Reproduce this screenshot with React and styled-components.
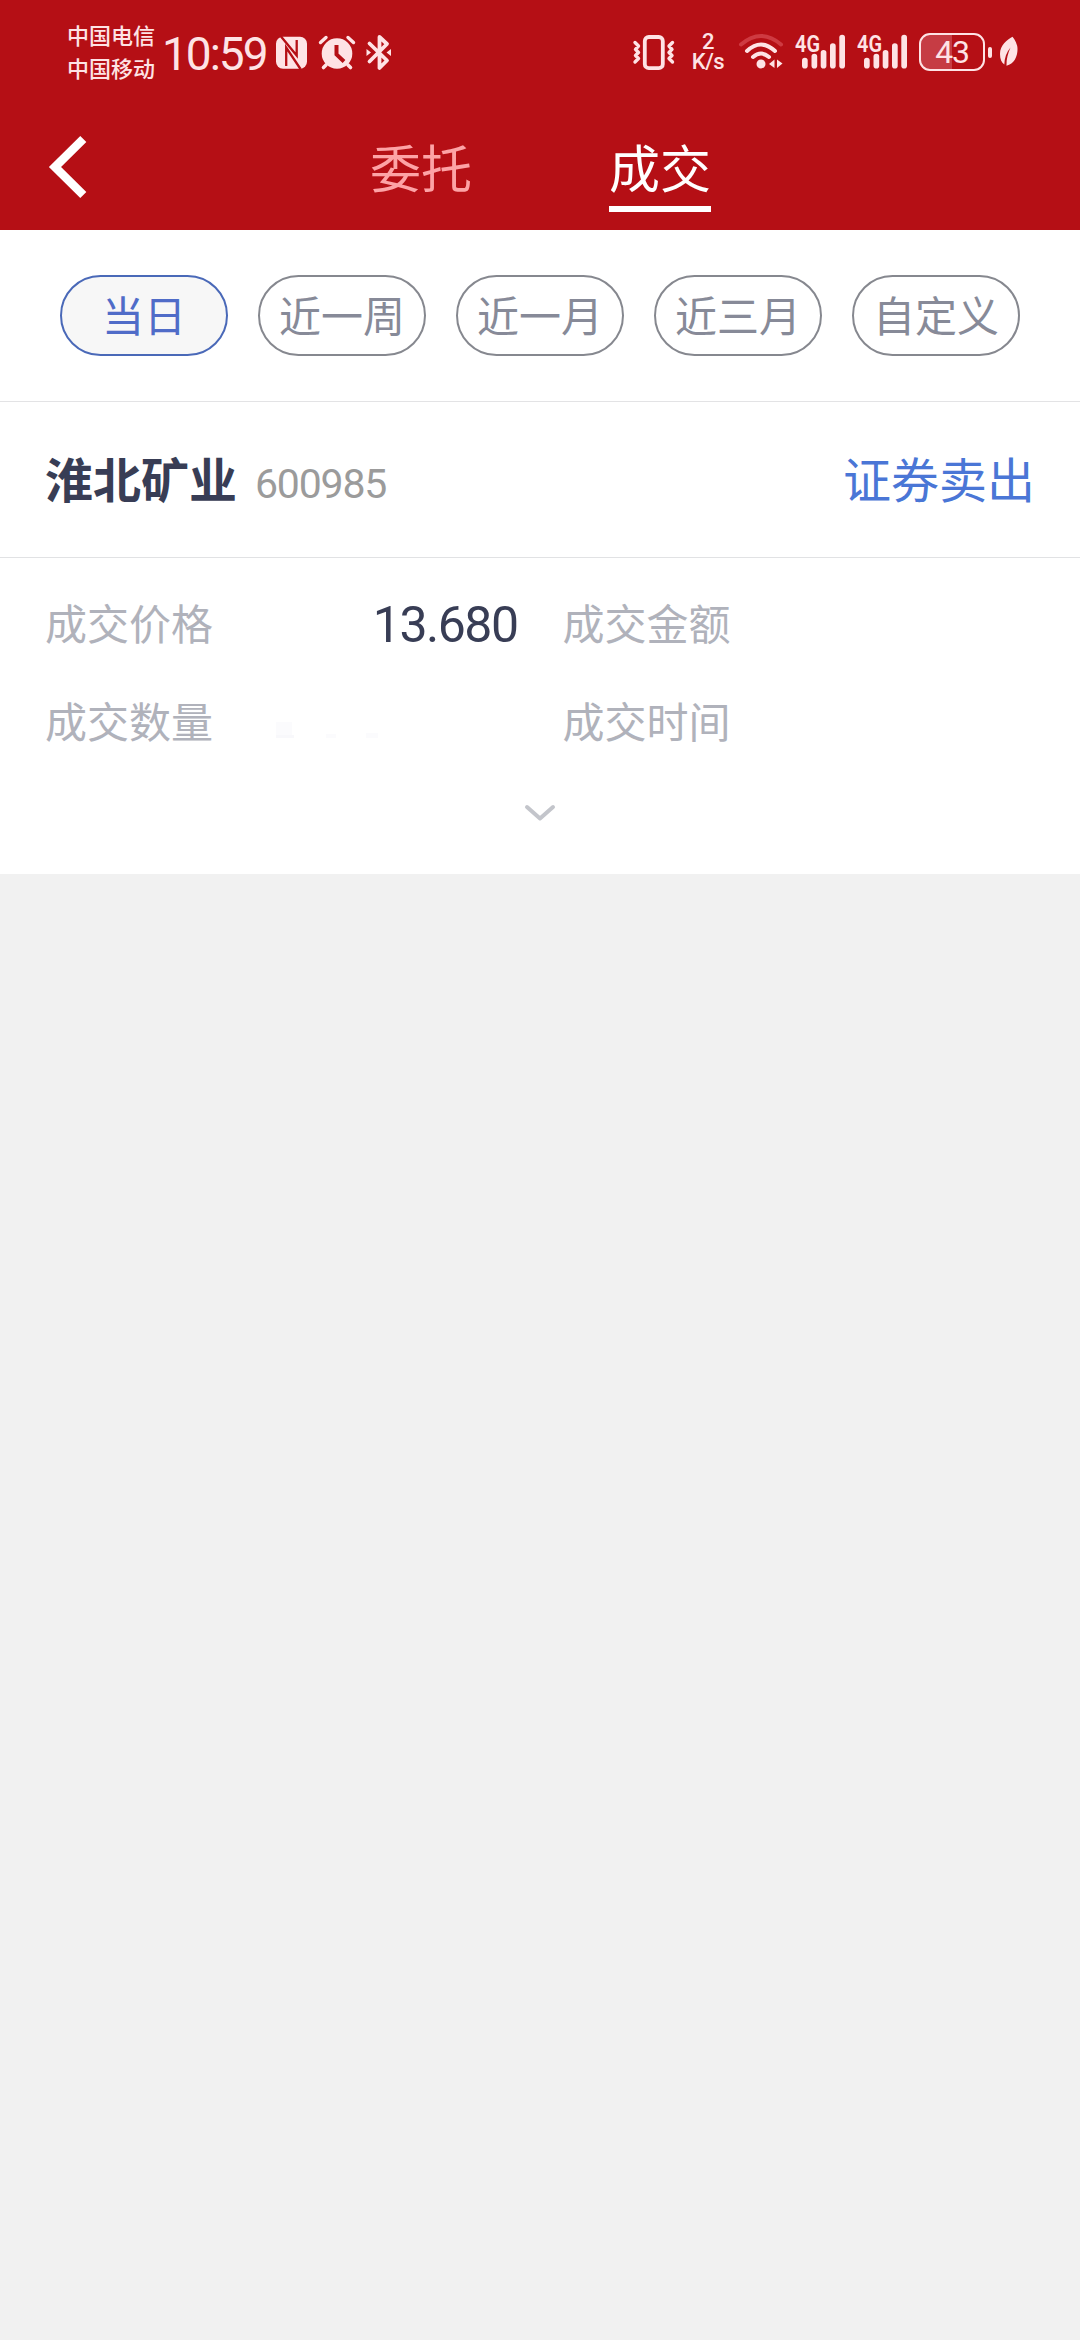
import React from 'react';
import styled, { createGlobalStyle } from 'styled-components';

const GlobalStyle = createGlobalStyle`
  * {
    box-sizing: border-box;
  }

  body {
    margin: 0;
    background: #f1f1f1;
    font-family: 'Noto Sans CJK SC', sans-serif;
  }
`;

const RED = '#b50f15';
const STATUS = '#fee3e5';

const Page = styled.div`
  width: 1080px;
  min-height: 2340px;
  background: #f1f1f1;
`;

const Header = styled.header`
  height: 230px;
  background: ${RED};
`;

const StatusBar = styled.div`
  display: flex;
  justify-content: space-between;
  height: 104px;
  padding: 0 61px 0 67px;
  color: ${STATUS};
`;

const StatusGroup = styled.div`
  display: flex;
  align-items: center;

  svg {
    flex: none;
    display: block;
  }
`;

const StatusIconGap = styled.span`
  width: ${({ $width }) => $width}px;
`;

const Carriers = styled.div`
  width: 88px;
  margin-right: 7px;
  padding-bottom: 2px;
  font-size: 22px;
  font-weight: 500;
  line-height: 33px;
  white-space: nowrap;
`;

const Clock = styled.div`
  width: 104px;
  margin-right: 8px;
  padding-top: 3px;
  font-family: Roboto, sans-serif;
  font-size: 46px;
  font-weight: 440;
  line-height: 52px;
  letter-spacing: -2px;
  white-space: nowrap;
`;

const Speed = styled.div`
  width: 36px;
  margin: 0 12px 0 14px;
  font-family: Roboto, sans-serif;
  font-size: 22px;
  font-weight: 500;
  line-height: 20px;
  letter-spacing: -0.5px;
  text-align: center;
`;

const Battery = styled.div`
  width: 66px;
  height: 38px;
  border: 2.5px solid ${STATUS};
  border-radius: 11px;
  background: linear-gradient(to right, #c63c44 31px, transparent 31px);
  font-family: Roboto, sans-serif;
  font-size: 32px;
  font-weight: 440;
  line-height: 34px;
  letter-spacing: -1.2px;
  text-align: center;
`;

const BatteryTip = styled.div`
  width: 4px;
  height: 11px;
  margin: 0 7px 0 3px;
  border-radius: 2px;
  background: ${STATUS};
`;

const NavBar = styled.nav`
  display: grid;
  grid-template-columns: 1fr auto 1fr;
  height: 126px;
`;

const BackButton = styled.button`
  display: flex;
  align-items: flex-start;
  padding: 30px 0 0 48px;
  border: 0;
  background: none;
`;

const Tabs = styled.div`
  display: flex;
  gap: 137px;
  height: 108px;
  padding-left: 1px;
`;

const Tab = styled.div`
  padding-top: 25px;
  border-bottom: 6px solid ${({ $active }) => ($active ? '#fff' : 'transparent')};
  color: ${({ $active }) => ($active ? '#fff' : '#fda3a6')};
  font-size: 51px;
  line-height: 74px;
`;

const Filters = styled.div`
  display: flex;
  gap: 30px;
  height: 172px;
  padding: 45px 60px 0;
  border-bottom: 1px solid #e3e3e5;
  background: #fff;
`;

const Pill = styled.button`
  width: 168px;
  height: 81px;
  padding: 0 0 4px;
  border: 2px solid ${({ $active }) => ($active ? '#4a69b8' : '#86888f')};
  border-radius: 41px;
  background: ${({ $active }) => ($active ? '#f7f7f7' : '#fff')};
  color: ${({ $active }) => ($active ? '#506cc8' : '#878a98')};
  font-family: inherit;
  font-size: 42px;
  line-height: 73px;
  white-space: nowrap;
`;

const Card = styled.section`
  height: 472px;
  background: #fff;
`;

const CardHead = styled.div`
  display: flex;
  align-items: baseline;
  height: 156px;
  padding: 40px 45px 0;
  border-bottom: 1px solid #e1e2e4;
  line-height: 70px;
`;

const StockName = styled.div`
  color: #383d55;
  font-size: 48px;
  font-weight: 700;
`;

const StockCode = styled.div`
  margin-left: 18px;
  color: #9b9b9b;
  font-family: Roboto, sans-serif;
  font-size: 41px;
  letter-spacing: -1.2px;
`;

const Direction = styled.div`
  margin-left: auto;
  color: #4a76d6;
  font-size: 48px;
`;

const Details = styled.div`
  display: grid;
  grid-template-columns: 1fr 1fr;
  column-gap: 45px;
  padding: 15px 45px 0;
`;

const Field = styled.div`
  display: flex;
  align-items: flex-start;
  justify-content: space-between;
  height: 98px;
`;

const Label = styled.span`
  color: #b0b2bb;
  font-size: 42px;
  line-height: 98px;
`;

const Value = styled.span`
  color: #383d55;
  font-family: Roboto, sans-serif;
  font-size: 50px;
  line-height: 104px;
  letter-spacing: -1.5px;
`;

const Expand = styled.div`
  display: flex;
  justify-content: center;
  padding-top: 35px;
`;

const NfcIcon = () => (
  <svg width="35" height="40" viewBox="0 0 35 40">
    <rect x="2" y="4.7" width="31" height="32" rx="7" fill={STATUS} />
    <path d="M7 4.5L22.7 23.5V8M12.2 34V15.5L26.5 37" fill="none" stroke={RED} strokeWidth="2.3" />
  </svg>
);

const AlarmIcon = () => (
  <svg width="38" height="40" viewBox="0 0 38 40">
    <circle cx="19" cy="21.5" r="15.3" fill={STATUS} />
    <path d="M2.5 10.5L8 5.5M35.5 10.5L30 5.5" stroke={STATUS} strokeWidth="3.4" strokeLinecap="round" />
    <path d="M8 33L5.5 35.5M30 33L32.5 35.5" stroke={STATUS} strokeWidth="3.6" strokeLinecap="round" />
    <path d="M18.5 13V22.5L26 29.5" fill="none" stroke={RED} strokeWidth="4" />
  </svg>
);

const BluetoothIcon = () => (
  <svg width="28" height="40" viewBox="0 0 28 40">
    <path
      d="M4.5 11.5L22 28.5L14.5 36V5L22 12L4.5 29.5"
      fill="none"
      stroke={STATUS}
      strokeWidth="3.8"
      strokeLinejoin="round"
      strokeLinecap="round"
    />
    <path d="M1.5 17L6 20.5L1.5 24ZM26 17L21.5 20.5L26 24Z" fill={STATUS} />
  </svg>
);

const VibrateIcon = () => (
  <svg width="44" height="40" viewBox="0 0 44 40" fill="none" stroke={STATUS}>
    <rect x="12.8" y="5" width="18" height="31.2" rx="4" strokeWidth="3.8" />
    <path
      d="M3 10.5L6.5 14L3.5 17.3L6.5 20.5L3.5 23.5L6.5 26.5L3 30M40.5 10.5L37 14L40 17.3L37 20.5L40 23.5L37 26.5L40.5 30"
      strokeWidth="3.4"
      strokeLinejoin="round"
      strokeLinecap="round"
    />
  </svg>
);

const WifiIcon = () => (
  <svg width="46" height="40" viewBox="0 0 46 40">
    <g fill="none" stroke={STATUS} strokeWidth="4" strokeLinecap="round">
      <path d="M3 12.5Q23 -4.5 43 12.5" stroke="#ce3a41" />
      <path d="M9 19Q23 6 37 19" />
      <path d="M15 25Q23 18 31 25" />
    </g>
    <circle cx="23" cy="32" r="4.5" fill={STATUS} />
    <path d="M36.5 27.5V36L31 32ZM39 27.5V36L44.5 31.5Z" fill={STATUS} />
  </svg>
);

const BARS = [
  { x: 7, y: 25.7 },
  { x: 16.5, y: 21.7 },
  { x: 25.7, y: 18 },
  { x: 35, y: 11.3 },
  { x: 44.3, y: 2.7 },
];

const SignalIcon = () => (
  <svg width="62" height="40" viewBox="0 0 62 40" fill={STATUS}>
    <text x="0" y="19.5" fontFamily="Roboto, sans-serif" fontSize="23" fontWeight="600" textLength="25" lengthAdjust="spacingAndGlyphs">4G</text>
    {BARS.map(({ x, y }) => (
      <rect key={x} x={x} y={y} width="5.7" height={36.5 - y} rx="2.8" />
    ))}
  </svg>
);

const LeafIcon = () => (
  <svg width="20" height="40" viewBox="0 0 20 40">
    <path d="M13.5 4.7C8 8 1 13 1 22C1 27 2.5 30.5 5.3 32.5C5.5 26 7.5 20 11.5 15.5C9 21 7.3 27 7.5 33.7C15 32 18.5 25 18.5 17C18.5 12 16 8 13.5 4.7Z" fill={STATUS} />
  </svg>
);

const BackIcon = () => (
  <svg width="42" height="66" viewBox="0 0 42 66">
    <path d="M35.3 5L7 33L35.3 61" fill="none" stroke="#fff" strokeWidth="8.6" />
  </svg>
);

const ChevronIcon = () => (
  <svg width="32" height="18" viewBox="0 0 32 18">
    <path d="M3 3L16 14.5L29 3" fill="none" stroke="#c3c5cb" strokeWidth="4" strokeLinecap="round" strokeLinejoin="round" />
  </svg>
);

// faint remains of a wiped-out amount
const HiddenValue = () => (
  <svg width="248" height="98" viewBox="0 0 248 98">
    <path d="M6 51H22V67H6ZM56 63H66V67H56ZM96 62H108V67H96Z" fill="#fbfbfd" />
    <path d="M6 64H24V67H6Z" fill="#f8f8fb" />
  </svg>
);

const RANGES = ['当日', '近一周', '近一月', '近三月', '自定义'];

const FIELDS = [
  { label: '成交价格', value: '13.680' },
  { label: '成交金额' },
  { label: '成交数量', hidden: true },
  { label: '成交时间' },
];

const App = () => (
  <Page>
    <GlobalStyle />
    <Header>
      <StatusBar>
        <StatusGroup>
          <Carriers>
            <div>中国电信</div>
            <div>中国移动</div>
          </Carriers>
          <Clock>10:59</Clock>
          <NfcIcon />
          <StatusIconGap $width={9} />
          <AlarmIcon />
          <StatusIconGap $width={9} />
          <BluetoothIcon />
        </StatusGroup>
        <StatusGroup>
          <VibrateIcon />
          <Speed>
            <div>2</div>
            <div>K/s</div>
          </Speed>
          <WifiIcon />
          <StatusIconGap $width={11} />
          <SignalIcon />
          <SignalIcon />
          <Battery>43</Battery>
          <BatteryTip />
          <LeafIcon />
        </StatusGroup>
      </StatusBar>
      <NavBar>
        <BackButton>
          <BackIcon />
        </BackButton>
        <Tabs>
          <Tab>委托</Tab>
          <Tab $active>成交</Tab>
        </Tabs>
      </NavBar>
    </Header>
    <Filters>
      {RANGES.map((range, i) => (
        <Pill key={range} $active={i === 0}>{range}</Pill>
      ))}
    </Filters>
    <Card>
      <CardHead>
        <StockName>淮北矿业</StockName>
        <StockCode>600985</StockCode>
        <Direction>证券卖出</Direction>
      </CardHead>
      <Details>
        {FIELDS.map(({ label, value, hidden }) => (
          <Field key={label}>
            <Label>{label}</Label>
            {value && <Value>{value}</Value>}
            {hidden && <HiddenValue />}
          </Field>
        ))}
      </Details>
      <Expand>
        <ChevronIcon />
      </Expand>
    </Card>
  </Page>
);

export default App;
